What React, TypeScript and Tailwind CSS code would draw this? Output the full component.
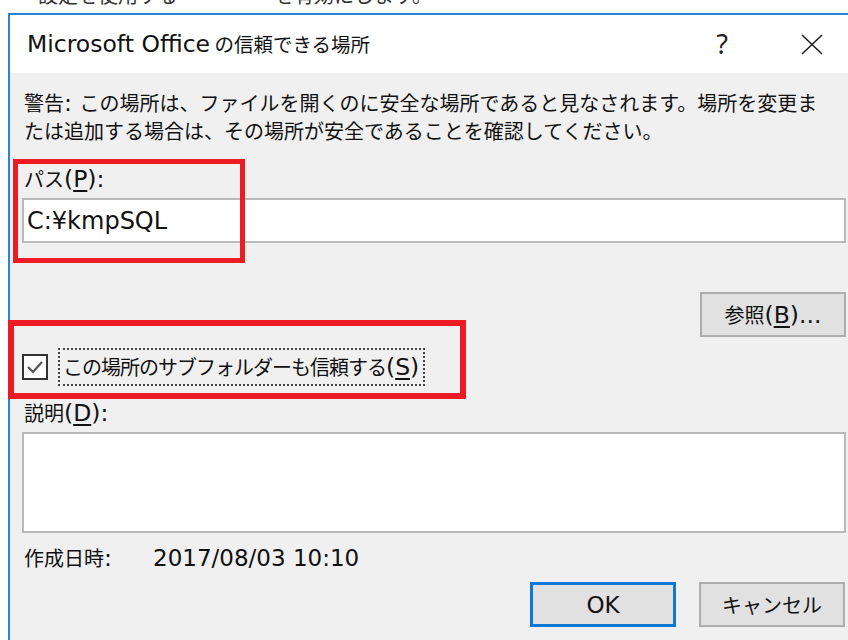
import type { ReactNode } from 'react';

// Latin runs are set a size up from the Japanese text, as the UI font does.
function L({ children, className = '' }: { children: ReactNode; className?: string }) {
  return (
    <span className={`font-['DejaVu_Sans','Noto_Sans_CJK_JP',sans-serif] text-[23.5px] tracking-normal ${className}`}>
      {children}
    </span>
  );
}

function Key({ k }: { k: string }) {
  return (
    <L>
      (<span className="underline underline-offset-[3px] decoration-[1.5px]">{k}</span>)
    </L>
  );
}

function CloseIcon() {
  return (
    <svg width="22" height="21" viewBox="0 0 22 21" fill="none" stroke="#222" strokeWidth="1.6">
      <path d="M1 1 L21 20 M21 1 L1 20" />
    </svg>
  );
}

function CheckIcon() {
  return (
    <svg width="22" height="22" viewBox="0 0 22 22" fill="none" stroke="#555" strokeWidth="2.2">
      <path d="M4 11 L9 16 L18 6" />
    </svg>
  );
}

function Button({ children, primary = false }: { children: ReactNode; primary?: boolean }) {
  return (
    <div
      className={`flex h-[45px] w-[146px] items-center justify-center bg-[#e1e1e1] ${
        primary ? 'border-[3px] border-[#0f78d6]' : 'border-2 border-[#adadad]'
      }`}
    >
      {children}
    </div>
  );
}

export default function App() {
  return (
    <div className="relative h-[640px] w-[848px] overflow-hidden bg-white font-['Noto_Sans_CJK_JP',sans-serif] text-[20px] leading-[28px] text-[#111]">
      {/* tail of the page text above the dialog */}
      <div className="h-[13px] overflow-hidden">
        <div className="-mt-[19px] flex pl-[38px] text-[#333]">
          <span>設定を使用する</span>
          <span className="ml-[96px]">を有効にします。</span>
        </div>
      </div>

      <div className="ml-[8px] w-[851px] border-2 border-b-0 border-[#2b83d6]">
        {/* title bar */}
        <div className="flex h-[58px] items-center bg-white">
          <div className="flex-1 pl-[17px] text-[19.5px]">
            <L>Microsoft Office</L> の信頼できる場所
          </div>
          <div className="flex h-full w-[90px] items-center justify-center font-['Noto_Sans',sans-serif] text-[27px] text-[#222]">
            ?
          </div>
          <div className="flex h-full w-[90px] items-center justify-center">
            <CloseIcon />
          </div>
        </div>

        {/* body */}
        <div className="flex flex-col bg-[#f0f0f0] pb-[20px] pl-[12px] pr-[11px] pt-[16px]">
          <p className="pl-[2px]">
            警告<L>: </L>この場所は、ファイルを開くのに安全な場所であると見なされます。場所を変更ま
            <br />
            たは追加する場合は、その場所が安全であることを確認してください。
          </p>

          <div className="mt-[20px] pl-[2px]">
            パス<Key k="P" />
            <L>:</L>
          </div>
          <div className="mt-[5px] flex h-[45px] items-center border-2 border-[#b9b9b9] bg-white pl-[3px]">
            <L className="text-[24px]">C:¥kmpSQL</L>
          </div>

          <div className="mt-[49px] self-end">
            <Button>
              参照<Key k="B" />
              <L>...</L>
            </Button>
          </div>

          <div className="mt-[11px] flex h-[38px] items-center">
            <div className="flex h-[26px] w-[26px] items-center justify-center border-2 border-[#333] bg-white">
              <CheckIcon />
            </div>
            <div className="ml-[10px] flex h-full items-center border-2 border-dotted border-[#444] pl-[3px] pr-[4px] tracking-[-1px]">
              この場所のサブフォルダーも信頼する<Key k="S" />
            </div>
          </div>

          <div className="mt-[13px] pl-[2px]">
            説明<Key k="D" />
            <L>:</L>
          </div>
          <div className="mt-[5px] h-[101px] border-2 border-[#b9b9b9] bg-white" />

          <div className="mt-[11px] flex pl-[2px]">
            <span className="w-[129px]">
              作成日時<L>:</L>
            </span>
            <L className="text-[23px]">2017/08/03 10:10</L>
          </div>

          <div className="mt-[10px] flex justify-end gap-[23px] pr-[1px]">
            <Button primary>
              <L className="text-[23px]">OK</L>
            </Button>
            <Button>キャンセル</Button>
          </div>
        </div>
      </div>

      {/* red highlight marks drawn over the dialog */}
      <div className="absolute left-[13px] top-[159px] h-[104px] w-[232px] border-[5px] border-[#ed1c24]" />
      <div className="absolute left-[8px] top-[320px] h-[79px] w-[458px] border-[6px] border-[#ed1c24]" />
    </div>
  );
}
